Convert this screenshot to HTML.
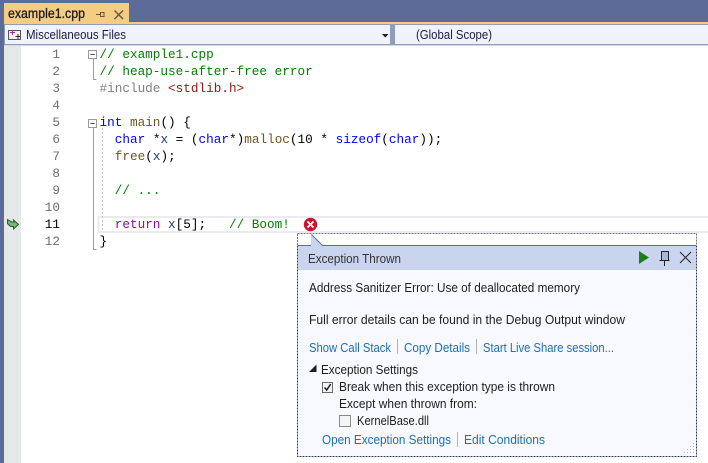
<!DOCTYPE html>
<html><head><meta charset="utf-8"><title>example1.cpp</title>
<style>
html,body{margin:0;padding:0;width:708px;height:463px;overflow:hidden;background:#fff}
svg{display:block}
.u{font-family:"Liberation Sans",sans-serif;font-size:12.5px;fill:#1e1e1e}
.l{fill:#1b6fb5}
.c{font-family:"Liberation Mono",monospace;font-size:12.7px;white-space:pre;fill:#000;stroke-width:.15}
.n{font-family:"Liberation Mono",monospace;font-size:12.7px;fill:#6f6f6f;text-anchor:end}
.g{fill:#008000}.k{fill:#0000ff}.v{fill:#1f377f}.f{fill:#74531f}.r{fill:#8f08c4}.p{fill:#808080}.s{fill:#a31515}
</style></head><body>
<svg width="708" height="463" viewBox="0 0 708 463" xmlns="http://www.w3.org/2000/svg">
<rect width="708" height="463" fill="#fff"/>
<!-- title band -->
<rect width="708" height="24" fill="#5d6b99"/>
<rect x="4" y="3" width="125" height="20" fill="#f5cc84"/>
<rect y="22" width="708" height="2" fill="#f5cc84"/>
<rect x="0" y="0" width="4" height="463" fill="#5d6b99"/>
<text class="u" x="8" y="18" textLength="77" lengthAdjust="spacingAndGlyphs" style="font-size:13.5px;fill:#1c1c1c;stroke:#1c1c1c;stroke-width:.3">example1.cpp</text>
<path d="M96 14.500h4M100.500 12v5" fill="none" stroke="#6a5630" stroke-width="1"/>
<rect x="100.500" y="12.500" width="3.500" height="4" fill="none" stroke="#6a5630" stroke-width="1"/>
<path d="M114.500 10.500l8.500 8.500M123 10.500l-8.500 8.500" fill="none" stroke="#6a5c3e" stroke-width="1.500"/>
<!-- nav bar -->
<rect x="4" y="24" width="704" height="21" fill="#8e9bbc"/>
<rect x="5" y="25" width="385" height="19" fill="#f0f3fc"/>
<rect x="395" y="25" width="313" height="19" fill="#f0f3fc"/>
<rect x="8.500" y="30.500" width="12" height="9" fill="#eef0f6" stroke="#555" stroke-width="1"/>
<path d="M10 32.500h5M12.500 30v5" stroke="#9a2fb0" stroke-width="1"/>
<path d="M15.500 36.500h5M18 34v5" stroke="#333" stroke-width="1"/>
<text class="u" x="26" y="39" textLength="100" lengthAdjust="spacingAndGlyphs" style="fill:#1c1a45;font-size:13px">Miscellaneous Files</text>
<path d="M382 34h6.500l-3.250 3.500z" fill="#1e1e1e"/>
<text class="u" x="416" y="39" textLength="76" lengthAdjust="spacingAndGlyphs" style="fill:#1c1a45;font-size:13px">(Global Scope)</text>
<rect x="4" y="45" width="704" height="1" fill="#d5d9e4"/>
<!-- margin -->
<rect x="4" y="46" width="17" height="417" fill="#e6e7e8"/>
<!-- current line -->
<rect x="98.500" y="217" width="611" height="15" fill="#fff" stroke="#eaeaf2" stroke-width="2"/>
<!-- arrow -->
<path d="M7.500 219.500l4.500 2.500 2 0-.5-2 5 4.500-5 4.500 0-2.500-3 0-3-3z" fill="#72b872" stroke="#2c5a2c" stroke-width="1"/>
<!-- line numbers -->
<text class="n" x="60" y="58">1</text>
<text class="n" x="60" y="75">2</text>
<text class="n" x="60" y="92">3</text>
<text class="n" x="60" y="109">4</text>
<text class="n" x="60" y="126">5</text>
<text class="n" x="60" y="143">6</text>
<text class="n" x="60" y="160">7</text>
<text class="n" x="60" y="177">8</text>
<text class="n" x="60" y="194">9</text>
<text class="n" x="60" y="211">10</text>
<text class="n" x="60" y="228" style="fill:#000">11</text>
<text class="n" x="60" y="245">12</text>
<!-- fold -->
<g fill="none" stroke="#9a9a9a" stroke-width="1">
<rect x="88.500" y="50.500" width="8" height="8" fill="#fff"/>
<path d="M90.500 54.500h4" stroke="#444"/>
<path d="M93.500 59v20.500h3"/>
<rect x="88.500" y="119.500" width="8" height="8" fill="#fff"/>
<path d="M90.500 123.500h4" stroke="#444"/>
<path d="M93.500 128v121.500h3"/>
<path d="M102.500 128v104" stroke="#c4c4c4" stroke-dasharray="2 2"/>
</g>
<!-- code -->
<text class="c g" x="99.500" y="58">// example1.cpp</text>
<text class="c g" x="99.500" y="75">// heap-use-after-free error</text>
<text class="c p" x="99.500" y="92">#include <tspan class="s">&lt;stdlib.h&gt;</tspan></text>
<text class="c" x="99.500" y="126"><tspan class="k">int</tspan> <tspan class="f">main</tspan>() {</text>
<text class="c" x="99.500" y="143">  <tspan class="k">char</tspan> *<tspan class="v">x</tspan> = (<tspan class="k">char</tspan>*)<tspan class="f">malloc</tspan>(10 * <tspan class="k">sizeof</tspan>(<tspan class="k">char</tspan>));</text>
<text class="c" x="99.500" y="160">  <tspan class="f">free</tspan>(<tspan class="v">x</tspan>);</text>
<text class="c g" x="99.500" y="194">  // ...</text>
<text class="c" x="99.500" y="228">  <tspan class="r">return</tspan> <tspan class="v">x</tspan>[5];   <tspan class="g">// Boom!</tspan></text>
<text class="c" x="99.500" y="245">}</text>
<!-- error icon -->
<circle cx="310.500" cy="224.500" r="6.700" fill="#d4102e"/>
<path d="M307.500 221.500l6 6M313.500 221.500l-6 6" stroke="#fff" stroke-width="1.800"/>
<!-- popup -->
<rect x="298" y="234" width="398" height="222" fill="#fff"/>
<rect x="298" y="246" width="398" height="210" fill="#f7f9fe"/>
<rect x="298" y="246" width="398" height="24" fill="#c9d5ef"/>
<path d="M311 234.500v11.500h12z" fill="#c9d5ef"/>
<path d="M298 245.500h13M323 245.500h373" stroke="#5d6b99" stroke-width="1"/>
<path d="M311.500 234.500l11.500 11.500" stroke="#5d6b99" stroke-width="1"/>
<path d="M297.500 233.500h399v12" fill="none" stroke="#777" stroke-width="1" stroke-dasharray="2 1"/>
<path d="M297.500 234v11" stroke="#777" stroke-dasharray="2 1"/>
<path d="M297.500 245.500v211h399v-211" fill="none" stroke="#2d3a63" stroke-width="1" stroke-dasharray="2 1"/>
<text class="u" x="308" y="263" textLength="93" lengthAdjust="spacingAndGlyphs" style="fill:#333">Exception Thrown</text>
<path d="M639 251l10 6.500-10 6.500z" fill="#1a7f16"/>
<path d="M661.500 251.500h7v9h-7z" fill="#a9b9d9" stroke="#222" stroke-width="1"/>
<path d="M659.500 260.500h10M664.500 261v5" stroke="#222" stroke-width="1"/>
<path d="M680 252l11 11M691 252l-11 11" stroke="#222" stroke-width="1"/>
<text class="u" x="309" y="292" textLength="271" lengthAdjust="spacingAndGlyphs">Address Sanitizer Error: Use of deallocated memory</text>
<text class="u" x="309" y="324" textLength="316" lengthAdjust="spacingAndGlyphs">Full error details can be found in the Debug Output window</text>
<text class="u l" x="309" y="352" textLength="82" lengthAdjust="spacingAndGlyphs">Show Call Stack</text>
<path d="M397.500 339v15M476.500 339v15M457.500 432v15" stroke="#aeb4c2" stroke-width="1"/>
<text class="u l" x="404" y="352" textLength="66" lengthAdjust="spacingAndGlyphs">Copy Details</text>
<text class="u l" x="483" y="352" textLength="131" lengthAdjust="spacingAndGlyphs">Start Live Share session...</text>
<path d="M309 372h7.500v-7.500z" fill="#1e1e1e"/>
<text class="u" x="321" y="374" textLength="97" lengthAdjust="spacingAndGlyphs">Exception Settings</text>
<rect x="322.500" y="382.500" width="10" height="10" fill="#f3f4f8" stroke="#6a6a6a"/>
<path d="M324.500 387.500l2.200 2.500 4-6" fill="none" stroke="#1e1e1e" stroke-width="1.500"/>
<text class="u" x="339" y="391" textLength="216" lengthAdjust="spacingAndGlyphs">Break when this exception type is thrown</text>
<text class="u" x="339" y="408" textLength="138" lengthAdjust="spacingAndGlyphs">Except when thrown from:</text>
<rect x="339.500" y="415.500" width="11" height="11" fill="#f3f4f8" stroke="#8a8a8a"/>
<text class="u" x="357" y="425" textLength="72" lengthAdjust="spacingAndGlyphs">KernelBase.dll</text>
<text class="u l" x="322" y="444" textLength="129" lengthAdjust="spacingAndGlyphs">Open Exception Settings</text>
<text class="u l" x="464" y="444" textLength="81" lengthAdjust="spacingAndGlyphs">Edit Conditions</text>
<g fill="#b5b9c6">
<rect x="693" y="443" width="1" height="1"/>
<rect x="690" y="446" width="1" height="1"/><rect x="693" y="446" width="1" height="1"/>
<rect x="687" y="449" width="1" height="1"/><rect x="690" y="449" width="1" height="1"/><rect x="693" y="449" width="1" height="1"/>
<rect x="684" y="452" width="1" height="1"/><rect x="687" y="452" width="1" height="1"/><rect x="690" y="452" width="1" height="1"/><rect x="693" y="452" width="1" height="1"/>
</g>
</svg>
</body></html>
